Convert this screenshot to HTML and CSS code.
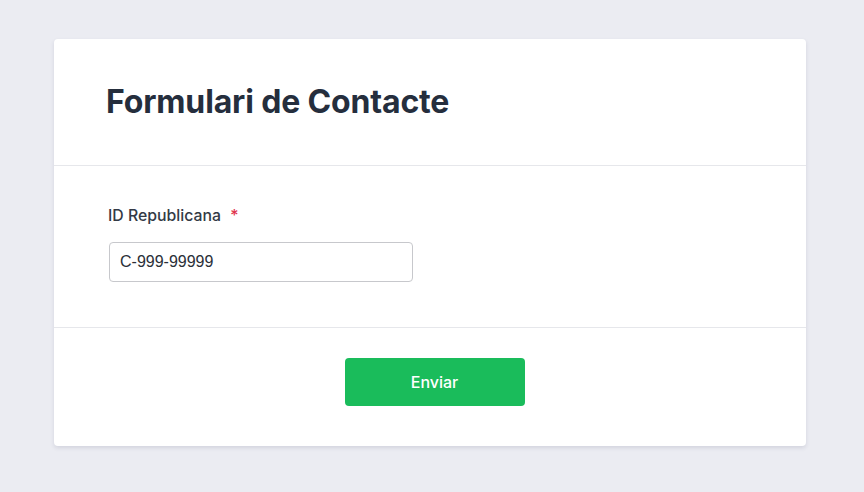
FILE: index.html
```html
<!DOCTYPE html>
<html lang="ca">
<head>
<meta charset="utf-8">
<title>Formulari de Contacte</title>
<link rel="stylesheet" href="styles.css">
</head>
<body>
<div class="card">
  <div class="card-header">
    <h1 class="title">Formulari de Contacte</h1>
  </div>
  <div class="card-body">
    <label class="label" for="id">ID Republicana <span class="req">*</span></label>
    <input class="input" id="id" type="text" value="C-999-99999">
  </div>
  <div class="card-footer">
    <button class="btn" type="button">Enviar</button>
  </div>
</div>
</body>
</html>
```

FILE: styles.css
```css
html, body {
  margin: 0;
  padding: 0;
}
body {
  background: #ebecf2;
  font-family: Inter, "Noto Sans", sans-serif;
  padding: 39px 0 0 54px;
  height: 492px;
  box-sizing: border-box;
}
.card {
  width: 752px;
  background: #fff;
  border-radius: 4px;
  box-shadow: 0 2px 4px rgba(40, 40, 80, 0.12);
}
.card-header {
  height: 127px;
  box-sizing: border-box;
  border-bottom: 1px solid #e6e7eb;
  display: flex;
  align-items: center;
  padding: 0 0 0 52px;
}
.title {
  margin: 0;
  font-size: 32px;
  font-weight: 700;
  color: #252e3d;
  letter-spacing: -0.15px;
  position: relative;
  top: -1px;
}
.card-body {
  box-sizing: border-box;
  height: 162px;
  border-bottom: 1px solid #e6e7eb;
  padding: 40px 0 0 54px;
  display: flex;
  flex-direction: column;
  align-items: flex-start;
}
.label {
  font-size: 15.8px;
  font-weight: 500;
  color: #333a45;
  line-height: 20px;
  margin-bottom: 16px;
}
.req {
  color: #e0314b;
  margin-left: 5px;
}
.input {
  width: 304px;
  height: 40px;
  box-sizing: border-box;
  margin-left: 1px;
  border: 1px solid #c7c8cc;
  border-radius: 4px;
  padding: 0 10px;
  font-family: "Liberation Sans", Arial, sans-serif;
  font-size: 16px;
  color: #2a2f38;
  outline: none;
}
.card-footer {
  height: 118px;
  box-sizing: border-box;
  padding: 30px 0 0 9px;
  display: flex;
  justify-content: center;
  align-items: flex-start;
}
.btn {
  width: 180px;
  height: 48px;
  border: none;
  border-radius: 4px;
  background: #1abc5b;
  color: #fff;
  font-family: Inter, "Noto Sans", sans-serif;
  font-size: 16px;
  font-weight: 500;
  cursor: pointer;
}
```
